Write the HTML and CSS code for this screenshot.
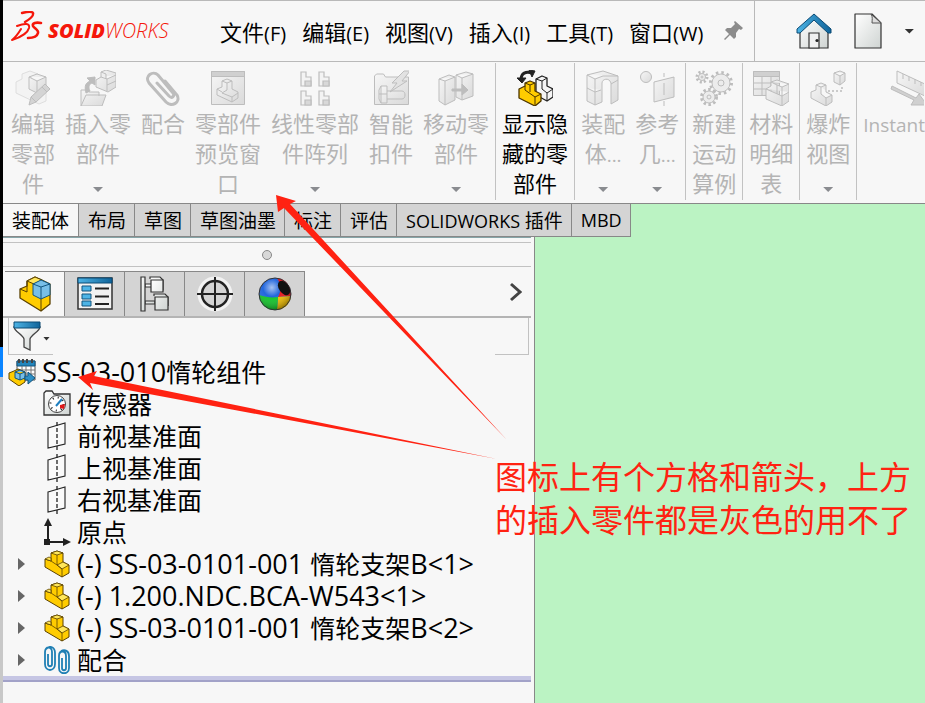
FILE: index.html
```
<!DOCTYPE html>
<html lang="zh-CN">
<head>
    <meta charset="UTF-8">
    <meta name="viewport" content="width=device-width, initial-scale=1.0">
    <title>SOLIDWORKS</title>
    <link rel="stylesheet" href="styles.css">
</head>
<body>

    <!-- Shared gradients and repeated icons -->
    <svg class="defs" width="0" height="0">
        <defs>
            <linearGradient id="blue" x1="0" y1="0" x2="1" y2="0">
                <stop offset="0" stop-color="#4db4e6"/>
                <stop offset="1" stop-color="#10649a"/>
            </linearGradient>
            <linearGradient id="paper" x1="0" y1="0" x2="1" y2="1">
                <stop offset="0" stop-color="#ffffff"/>
                <stop offset="1" stop-color="#cfd4d2"/>
            </linearGradient>
            <linearGradient id="dim" x1="0" y1="0" x2="1" y2="1">
                <stop offset="0" stop-color="#f6f6f6"/>
                <stop offset="1" stop-color="#dadada"/>
            </linearGradient>
            <radialGradient id="ball" cx="0.4" cy="0.3" r="0.7">
                <stop offset="0" stop-color="#fff" stop-opacity="0.6"/>
                <stop offset="0.4" stop-color="#fff" stop-opacity="0"/>
                <stop offset="1" stop-color="#000" stop-opacity="0.35"/>
            </radialGradient>
            <symbol id="part" viewBox="0 0 26 28">
                <path d="M1 9 7 11V3l6-2 6 2v9l6 3v8l-7 4L1 17z" fill="#fc0" stroke="#5c4200" stroke-linejoin="round"/>
                <path d="m7 3 6 2 6-2-6-2zM18 19l7-4-6-3-6 3zM1 9l4-2 2 1v3z" fill="#ffe65a" stroke="#5c4200" stroke-width="0.8"/>
                <path d="M13 5v10l5 4v8M7 11l6 4" fill="none" stroke="#5c4200" stroke-width="0.8"/>
            </symbol>
            <symbol id="plane" viewBox="0 0 28 28">
                <path d="M5 6 22 1v21L5 26z" fill="#fafafa" stroke="#222" stroke-width="1.1"/>
                <path d="M14 0v28" stroke="#222" stroke-width="1.3" stroke-dasharray="4 2"/>
            </symbol>
        </defs>
    </svg>

    <div class="edge"></div>

    <div class="app">
        <!-- Menu bar -->
        <header class="menu-bar">
            <div class="logo">
                <svg width="32" height="32" viewBox="0 0 32 32" fill="none" stroke="#f5170b" stroke-linecap="round">
                    <path d="M11 2c4-1 10-2 11 0 1 3-3 6-8 9" stroke-width="2.4"/>
                    <path d="M6 15c8-3 13-3 12 2-1 4-7 9-17 12 4-3 6-6 9-11" stroke-width="2" stroke-linejoin="round"/>
                    <path d="M30 12c-5-1-9 0-8 3 1 2 6 4 5 7-1 4-6 5-10 5" stroke-width="2.6"/>
                </svg>
                <span class="logo-text"><b>SOLID</b>WORKS</span>
            </div>
            <nav class="menus">
                <button>文件<span>(F)</span></button>
                <button>编辑<span>(E)</span></button>
                <button>视图<span>(V)</span></button>
                <button>插入<span>(I)</span></button>
                <button>工具<span>(T)</span></button>
                <button>窗口<span>(W)</span></button>
            </nav>
            <button class="pin" aria-label="固定">
                <svg width="20" height="20" viewBox="0 0 20 20" fill="#8c8c8c">
                    <path d="m11 0 8 7-2 2-2-1-3 4v4l-2 2-4-4-5 5-1-1 5-5-4-4 2-2h4l4-4-1-2z"/>
                </svg>
            </button>
            <div class="quick">
                <button aria-label="主页">
                    <svg width="36" height="36" viewBox="0 0 36 36">
                        <path d="M4 17 18 5l14 12v18H4z" fill="url(#paper)" stroke="#333" stroke-width="1.2"/>
                        <path d="M13 35V20h10v15z" fill="#f0f0f0" stroke="#333" stroke-width="1.2"/>
                        <path d="M18 1 1 16v4h3L18 7l14 13h3v-4z" fill="url(#blue)" stroke="#0b4a74"/>
                        <circle cx="21" cy="27.5" r="1.6" fill="#222"/>
                    </svg>
                </button>
                <button aria-label="新建">
                    <svg width="28" height="36" viewBox="0 0 28 36">
                        <path d="M1 1h17l9 9v25H1z" fill="url(#paper)" stroke="#333" stroke-width="1.2" stroke-linejoin="round"/>
                        <path d="M17 1c2 3 1 6 1 9h9z" fill="#ddd" stroke="#555"/>
                    </svg>
                </button>
                <button aria-label="更多"><i class="caret dark"></i></button>
            </div>
        </header>

        <!-- Command toolbar -->
        <div class="toolbar">
            <div class="group">
                <button disabled>
                    <svg width="36" height="36" viewBox="0 0 36 36" fill="url(#dim)" stroke="#bdbdbd">
                        <path d="M1 12 7 9V4l8-3 8 3-7 3v9l15 7v8l-7 3L1 23z" stroke="#dedede" fill="#f3f3f3"/>
                        <path d="m14 7 8-3 9 3v12l-9 4-8-4zM14 7l8 4 9-4M22 11v12"/>
                        <path d="m14 35 2-8 14-13 5 5-14 13zM27 17l5 5M16 27l5 5" fill="#d4d4d4"/>
                    </svg>
                    <span class="label">编辑<br>零部<br>件</span>
                </button>
                <button disabled>
                    <svg width="36" height="36" viewBox="0 0 36 36" fill="url(#dim)" stroke="#bdbdbd">
                        <path d="M1 36V20h6l2 2h10v4M1 36l5-11h20l-4 11z"/>
                        <path d="m16 10 5-3V2l5-2 10 3v14l-8 5-12-5zM21 7l6 2 9-4M27 9v12M21 2l5 2v5M27 15l9-4"/>
                        <path d="M6 23c-2-8 0-10 4-12l-3-3 8-1v8l-3-2c-3 1-4 4-2 8z" fill="#bdbdbd"/>
                    </svg>
                    <span class="label">插入零<br>部件</span>
                    <i class="caret"></i>
                </button>
                <button disabled>
                    <svg width="36" height="36" viewBox="0 0 36 36" fill="none" stroke="#bdbdbd" stroke-width="3" stroke-linecap="round">
                        <path d="m12 13 12 13c3 3 6 0 4-3L13 5C8 0-1 6 4 13l17 19c6 6 15 0 11-7L20 11"/>
                    </svg>
                    <span class="label">配合</span>
                </button>
                <button disabled>
                    <svg width="36" height="36" viewBox="0 0 36 36" fill="url(#dim)" stroke="#bdbdbd">
                        <path d="M1.5 1.5h33v33h-33z"/>
                        <path d="M1.5 1.5h33v5h-33z" fill="#d0d0d0"/>
                        <path d="m7 19 5-2v-6l5-2 5 2v8l6 3v6l-6 4-15-7zM12 11l5 2 5-2M17 13v7l-5 3 10 4v5M22 27l6-4M7 19l5 3"/>
                    </svg>
                    <span class="label">零部件<br>预览窗<br>口</span>
                </button>
                <button disabled>
                    <svg width="36" height="36" viewBox="0 0 36 36" fill="#f3f3f3" stroke="#bdbdbd" stroke-width="1.2">
                        <path d="M4 2h5v5h5v9H4zM22 2h5v5h5v9H22zM4 21h5v5h5v9H4zM22 21h5v5h5v9H22z"/>
                        <path d="M8 11h6v5H8zM26 11h6v5h-6zM8 30h6v5H8zM26 30h6v5h-6z" fill="#d8d8d8"/>
                    </svg>
                    <span class="label">线性零部<br>件阵列</span>
                    <i class="caret"></i>
                </button>
                <button disabled>
                    <svg width="36" height="36" viewBox="0 0 36 36" fill="url(#dim)" stroke="#bdbdbd">
                        <path d="M1.5 34.500V6l2-2h7l2 3h23v27.500z"/>
                        <path d="M8 16h6v17H8l-2-4v-9zM14 21h15c4 0 4 8 0 8H14M8 16v17M6 24h8"/>
                        <path d="m31 1-12 12h5l-7 9 17-11h-5l8-10z" fill="#e2e2e2"/>
                    </svg>
                    <span class="label">智能<br>扣件</span>
                </button>
                <button disabled>
                    <svg width="36" height="36" viewBox="0 0 36 36" fill="url(#dim)" stroke="#bdbdbd">
                        <path d="m1 9 10-4 6 2v23L7 35l-6-4zM1 9l6 2 10-4M7 11v24"/>
                        <path d="m18 5 10-3 7 2v22l-11 4-6-3zM18 5l6 3 11-4M24 8v22"/>
                        <path d="M14 19h10v-5l6 6-6 5v-4H14z" fill="#bdbdbd"/>
                    </svg>
                    <span class="label">移动零<br>部件</span>
                    <i class="caret"></i>
                </button>
            </div>
            <div class="group">
                <button>
                    <svg width="36" height="36" viewBox="0 0 36 36" stroke="#222" stroke-linejoin="round">
                        <path d="m19 9 6-3 5 2v8l6 3v8l-6 4-11-6z" fill="#f5f5f5" stroke-width="1.3"/>
                        <path d="m19 9 6 2 5-3M25 11v8l5 4 6-4M30 23v8" fill="none"/>
                        <path d="m2 19 6-3v-3l5-2 5 2v8l6 3v7l-6 5-16-8z" fill="#fc0" stroke="#4c3500" stroke-width="1.3"/>
                        <path d="m8 13 5 2 5-2M13 15v7M8 16v4l10 7 6-3M18 27v8" fill="none" stroke="#4c3500"/>
                        <path d="M4 10c0-7 5-9 11-7" fill="none" stroke-width="3"/>
                        <path d="m0 8 5 5 4-5zM12 0l6 1-3 6z" fill="#222"/>
                    </svg>
                    <span class="label">显示隐<br>藏的零<br>部件</span>
                </button>
            </div>
            <div class="group">
                <button disabled>
                    <svg width="36" height="36" viewBox="0 0 36 36" fill="url(#dim)" stroke="#bdbdbd">
                        <path d="m2 5 16-4 15 5v24l-7 4V13c-2-6-9-4-9 0v19l-7 3-8-4zM2 5l8 4 8-3 15 0M10 9v26M2 18l8 4 6-2M26 14l7-4"/>
                    </svg>
                    <span class="label">装配<br>体<span>...</span></span>
                    <i class="caret"></i>
                </button>
                <button disabled>
                    <svg width="36" height="36" viewBox="0 0 36 36" fill="url(#dim)" stroke="#bdbdbd">
                        <circle cx="7" cy="7" r="5.500"/>
                        <path d="m15 12 20-5v20l-20 5zM25 3v4M25 13v12M25 31v5"/>
                    </svg>
                    <span class="label">参考<br>几<span>...</span></span>
                    <i class="caret"></i>
                </button>
            </div>
            <div class="group">
                <button disabled>
                    <svg width="38" height="36" viewBox="0 0 38 36" fill="#ececec" stroke="#bdbdbd">
                        <g fill="none" stroke-width="3">
                            <circle cx="26" cy="13" r="10.5" stroke-dasharray="2.5 3"/>
                            <circle cx="14" cy="27" r="7.5" stroke-dasharray="2.5 2.4"/>
                            <circle cx="7" cy="7" r="5" stroke-dasharray="2 1.900"/>
                        </g>
                        <circle cx="26" cy="13" r="9"/><circle cx="26" cy="13" r="3"/>
                        <circle cx="14" cy="27" r="6"/><circle cx="14" cy="27" r="2"/>
                        <circle cx="7" cy="7" r="3.5"/><circle cx="7" cy="7" r="1"/>
                    </svg>
                    <span class="label">新建<br>运动<br>算例</span>
                </button>
            </div>
            <div class="group">
                <button disabled>
                    <svg width="36" height="36" viewBox="0 0 36 36" fill="url(#dim)" stroke="#bdbdbd">
                        <path d="M.5 1.500h26v24H.5zM.5 13h26M.5 19h26M9 6v19M18 6v19"/>
                        <path d="M.5 1.500h26v5H.5z" fill="#d0d0d0"/>
                        <path d="m13 19 5-3v-4l6-2 12 4v17l-7 5-16-7zM18 12l6 3 5 2 7-3M29 17v19M24 15v9M13 19l16 7 7-4"/>
                    </svg>
                    <span class="label">材料<br>明细<br>表</span>
                </button>
            </div>
            <div class="group">
                <button disabled>
                    <svg width="36" height="36" viewBox="0 0 36 36" fill="url(#dim)" stroke="#bdbdbd">
                        <path d="m1 22 5-2v-5l5-2 5 2v7l6 3v7l-6 4-15-8zM6 15l5 2 5-2M11 17v7l5 4 6-3M16 28v8"/>
                        <path d="m24 3 6-2 5 2v8l-5 4-6-3zM24 3l6 3 5-3M30 6v9"/>
                        <path d="M18 21h14v-6" fill="none" stroke-dasharray="2 2" stroke-width="1.5"/>
                    </svg>
                    <span class="label">爆炸<br>视图</span>
                    <i class="caret"></i>
                </button>
            </div>
            <div class="group">
                <button disabled>
                    <svg width="60" height="36" viewBox="0 0 60 36" fill="url(#dim)" stroke="#bdbdbd">
                        <path d="M33 1 63 15v12L33 13zM39 4v5M45 7v4M51 9v5M57 12v4"/>
                        <path d="m28 16 24 12 3-4 8 11H47l3-5-23-11z" fill="#d0d0d0"/>
                    </svg>
                    <span class="label"><span>Instant</span></span>
                </button>
            </div>
        </div>

        <!-- Work area -->
        <main class="workspace">
            <div class="tabs">
                <button class="active">装配体</button>
                <button>布局</button>
                <button>草图</button>
                <button>草图油墨</button>
                <button>标注</button>
                <button>评估</button>
                <button><span>SOLIDWORKS </span>插件</button>
                <button><span>MBD</span></button>
            </div>

            <aside class="panel">
                <div class="grip"><i></i></div>

                <div class="manager">
                    <button class="active" aria-label="设计树">
                        <svg width="34" height="36" viewBox="0 0 34 36" stroke="#5c4200" stroke-linejoin="round">
                            <path d="m2 13 7-3V5l8-4 7 3 8 4v20l-9 7-21-13z" fill="#fc0" stroke-width="1.3"/>
                            <path d="m9 5 8-4 7 3-8 4z" fill="#ffe65a"/>
                            <path d="m2 13 7 3V5M23 23v12" fill="none"/>
                            <path d="m15 8 8-4 9 4v11l-9 4-8-4z" fill="#78bfe8" stroke="#12557f"/>
                            <path d="m15 8 8 3 9-3M23 11v12" fill="none" stroke="#12557f"/>
                        </svg>
                    </button>
                    <button aria-label="属性">
                        <svg width="36" height="34" viewBox="0 0 36 34">
                            <path d="M1 1h34v31H1z" fill="#f2f2f2" stroke="#333" stroke-width="1.5"/>
                            <path d="M1 1h34v5H1z" fill="url(#blue)" stroke="#0b4a74"/>
                            <path d="M5 9h9v5H5zM5 17h9v5H5zM5 24h9v5H5z" fill="#4db4e6" stroke="#12557f"/>
                            <path d="M18 11.500h14M18 19.500h14M18 27h14" stroke="#222" stroke-width="2"/>
                        </svg>
                    </button>
                    <button aria-label="配置">
                        <svg width="30" height="36" viewBox="0 0 30 36" fill="url(#paper)" stroke="#333" stroke-width="1.2">
                            <path d="M5 8h7v3H5zM5 25h10v3H5z"/>
                            <path d="M1 1h4v34H1z"/>
                            <path d="M10 3V1h10l3 3v10h-2M14 20v-2h11l3 3v9"/>
                            <path d="M11 4h12v12H11zM15 21h13v13H15z"/>
                        </svg>
                    </button>
                    <button aria-label="尺寸">
                        <svg width="36" height="36" viewBox="0 0 36 36" fill="none" stroke="#222">
                            <circle cx="18" cy="18" r="15" stroke="#f2f2f2" stroke-width="5"/>
                            <circle cx="18" cy="18" r="13" stroke-width="2.5"/>
                            <path d="M18 1v34M0 18h36" stroke-width="2"/>
                        </svg>
                    </button>
                    <button aria-label="外观">
                        <svg width="36" height="36" viewBox="0 0 36 36">
                            <circle cx="18" cy="18" r="16" fill="#2266dd"/>
                            <path d="M20 2c9 1 14 8 14 18l-13 1c4-7 3-13-1-19z" fill="#e8161c"/>
                            <path d="m34 20-13 1-1 13c8-1 13-6 14-14z" fill="#f0be00"/>
                            <path d="M2 19c7 2 12 3 19 2l-1 13C10 35 3 29 2 19z" fill="#12c52a"/>
                            <circle cx="18" cy="18" r="16" fill="url(#ball)" stroke="#333"/>
                            <ellipse cx="27" cy="12" rx="5" ry="8" fill="#111" transform="rotate(-35 27 12)"/>
                        </svg>
                    </button>
                    <button class="more" aria-label="展开">
                        <svg width="14" height="20" viewBox="0 0 14 20"><path d="m3 2 9 8-9 8" fill="none" stroke="#444" stroke-width="3"/></svg>
                    </button>
                </div>

                <div class="filter">
                    <button aria-label="过滤器">
                        <svg width="28" height="30" viewBox="0 0 28 30">
                            <path d="M1 6h26c0 4-9 8-10 12v11l-6-3v-8C10 14 1 10 1 6z" fill="url(#paper)" stroke="#444" stroke-width="1.3"/>
                            <path d="M1 1h26v6H1z" fill="url(#blue)" stroke="#0b4a74"/>
                        </svg>
                        <i class="caret small"></i>
                    </button>
                    <input type="text" aria-label="过滤">
                    <span class="filter-end"></span>
                </div>

                <ul class="tree">
                    <li class="root">
                        <svg width="28" height="28" viewBox="0 0 28 28">
                            <path d="M9 3h18v19H9z" fill="#fff" stroke="#555"/>
                            <path d="M9 3h18v5H9z" fill="#2386bd" stroke="#12557f"/>
                            <path d="M9 12h18M9 16h18M14 8v14M18 8v14M23 8v14" stroke="#777"/>
                            <path d="M11 5V1M15 5V1M19 5V1M24 5V1" stroke="#444" stroke-width="2"/>
                            <path d="m1 15 5-2 4-2 7 3v10l-6 4-10-7z" fill="#fc0" stroke="#5c4200"/>
                            <path d="m7 14 5-2 5 2v6l-5 2-5-2zM7 14l5 2 5-2M12 16v6" fill="#78bfe8" stroke="#12557f"/>
                            <path d="M17 18h3v-4l7 6-7 6v-4h-3z" fill="#2c8fc6" stroke="#12557f"/>
                        </svg>
                        <div class="name"><span>SS-03-010</span>惰轮组件</div>
                    </li>
                    <li>
                        <svg width="28" height="28" viewBox="0 0 28 28">
                            <path d="M1 25V3l2-2h6l2 3h16v21z" fill="url(#paper)" stroke="#333" stroke-width="1.3"/>
                            <circle cx="14" cy="14" r="8.5" fill="#fff" stroke="#444"/>
                            <circle cx="14" cy="14" r="6.5" fill="none" stroke="#222" stroke-width="2" stroke-dasharray="1 4.1"/>
                            <path d="m13 16 6-7" stroke="#1e7fc0" stroke-width="2"/>
                            <path d="m17 15 5-1-1 5-4-1z" fill="#e01818"/>
                        </svg>
                        <div class="name">传感器</div>
                    </li>
                    <li><svg width="28" height="28"><use href="#plane"/></svg><div class="name">前视基准面</div></li>
                    <li><svg width="28" height="28"><use href="#plane"/></svg><div class="name">上视基准面</div></li>
                    <li><svg width="28" height="28"><use href="#plane"/></svg><div class="name">右视基准面</div></li>
                    <li>
                        <svg width="28" height="28" viewBox="0 0 28 28" fill="#222">
                            <path d="M4 21V8H1l4-8 4 8H6v13h1v2h13v-3l8 4-8 4v-3H7v2H1v-6z"/>
                        </svg>
                        <div class="name">原点</div>
                    </li>
                    <li class="branch">
                        <button aria-label="展开"></button>
                        <svg width="28" height="28"><use href="#part"/></svg>
                        <div class="name"><span>(-) SS-03-0101-001 </span>惰轮支架<span>B&lt;1&gt;</span></div>
                    </li>
                    <li class="branch">
                        <button aria-label="展开"></button>
                        <svg width="28" height="28"><use href="#part"/></svg>
                        <div class="name"><span>(-) 1.200.NDC.BCA-W543&lt;1&gt;</span></div>
                    </li>
                    <li class="branch">
                        <button aria-label="展开"></button>
                        <svg width="28" height="28"><use href="#part"/></svg>
                        <div class="name"><span>(-) SS-03-0101-001 </span>惰轮支架<span>B&lt;2&gt;</span></div>
                    </li>
                    <li class="branch">
                        <button aria-label="展开"></button>
                        <svg width="28" height="28" viewBox="0 0 28 28" fill="none" stroke="#1f7fb4" stroke-width="1.8">
                            <path d="M5 8v10c0 3 4 3 4 0V6c0-6-7-6-7 0v12c0 8 10 8 10 0V7c0-6-5-8-9-4"/>
                            <path d="M19 12v10c0 3 4 3 4 0V10c0-6-7-6-7 0v12c0 7 10 7 10 0V10c0-5-4-7-8-5"/>
                        </svg>
                        <div class="name">配合</div>
                    </li>
                </ul>
            </aside>
        </main>
    </div>

    <!-- Notes over the window -->
    <svg class="arrows" width="520" height="480" fill="#ff2212">
        <path d="m276 195 20 6-6 3 217 236L284 208l-6 4z"/>
        <path d="m78 377 19-6-3 5 403 83L90 383l3 7z"/>
    </svg>
    <p class="note">图标上有个方格和箭头，上方<br>的插入零件都是灰色的用不了</p>

</body>
</html>
```
FILE: styles.css
```
* {
    box-sizing: border-box;
}

body {
    margin: 0;
    min-height: 100vh;
    display: flex;
    position: relative;
    overflow: hidden;
    background: #f7f7f7;
    color: #000;
    font-family: "Open Sans", "Noto Sans CJK SC", sans-serif;
    font-size: 22px;
}

button {
    margin: 0;
    padding: 0;
    border: none;
    background: none;
    color: inherit;
    font: inherit;
    white-space: nowrap;
}

svg {
    display: block;
    flex: none;
}

.defs {
    position: absolute;
}

.edge {
    flex: none;
    width: 3px;
    background: linear-gradient(#000 347px, #0a84ff 347px, #0a84ff 377px, #c8c8c8 377px);
}

.app {
    flex: 1;
    min-width: 0;
    display: flex;
    flex-direction: column;
}

.caret {
    width: 10px;
    height: 5px;
    background: #8a8c90;
    clip-path: polygon(0 0, 100% 0, 50% 100%);
}

.caret.dark {
    display: block;
    background: #333;
}

.caret.small {
    width: 7px;
    height: 4px;
    margin-top: 5px;
    background: #333;
}

/*--------------------
Menu bar
--------------------*/
.menu-bar {
    display: flex;
    align-items: stretch;
    height: 62px;
    border-top: 1px solid #b9b9b9;
    border-bottom: 1px solid #b9b9b9;
}

.logo {
    display: flex;
    align-items: center;
    gap: 5px;
    width: 217px;
    padding: 0 0 8px 8px;
    color: #f5170b;
}

.logo-text {
    padding-top: 8px;
    font-size: 20px;
    font-style: italic;
    font-weight: 300;
    line-height: 24px;
}

.logo-text b {
    font-weight: 800;
}

.menus {
    display: flex;
    gap: 16px;
}

.menus span,
.label span {
    font-size: 20px;
}

.pin {
    padding: 0 10px 0 21px;
}

.quick {
    flex: 1;
    display: flex;
    align-items: center;
    gap: 22px;
    padding-left: 41px;
    border-left: 1px solid #b9b9b9;
}

/*--------------------
Toolbar
--------------------*/
.toolbar {
    display: flex;
    height: 141px;
    padding: 1px 0 3px 3px;
    overflow: hidden;
}

.group {
    flex: none;
    display: flex;
    padding: 0 1px;
    border-left: 1px solid #c2c2c2;
}

.group:first-child {
    border-left: none;
    padding-left: 0;
}

.group button {
    position: relative;
    display: flex;
    flex-direction: column;
    align-items: center;
    justify-content: flex-start;
    gap: 2px;
    padding: 7px 5px 0;
}

.group button:disabled {
    color: #b4b4b4;
}

.label {
    line-height: 30px;
}

.label span {
    font-size: 19px;
}

/* drop-down mark sits over the last text row */
.group .caret {
    position: absolute;
    left: calc(50% - 5px);
    bottom: 8px;
}

/*--------------------
Command tabs
--------------------*/
.workspace {
    flex: 1;
    background: #bbf3c3;
    border-top: 1px solid #888;
}

.tabs {
    display: flex;
    height: 33px;
    font-size: 19px;
}

.tabs button {
    padding: 0 8px 0 9px;
    background: #d4d4d4;
    border-right: 1px solid #888;
    border-bottom: 1px solid #888;
}

.tabs .active {
    padding-right: 9px;
    background: #f7f7f7;
}

.tabs span {
    font-size: 18px;
}

/*--------------------
Side panel
--------------------*/
.panel {
    width: 532px;
    min-height: calc(100vh - 237px);
    background: #f7f7f7;
    border-right: 1px solid #888;
}

.grip {
    height: 30px;
    margin-right: 3px;
    border-top: 1px solid #86a5a8;
    border-bottom: 1px solid #c2c2c2;
    display: flex;
    flex-direction: column;
    align-items: center;
}

.grip::before {
    content: "";
    width: 100%;
    height: 4px;
    border-bottom: 1px solid #c2c2c2;
}

.grip i {
    width: 10px;
    height: 10px;
    margin-top: 7px;
    border: 1px solid #888;
    border-radius: 50%;
    background: #d8d8d8;
}

.manager {
    display: flex;
    height: 51px;
    margin-right: 3px;
    padding: 4px 0 0 2px;
    border-bottom: 2px solid #b4b4b4;
}

.manager button {
    display: flex;
    align-items: center;
    justify-content: center;
    width: 60px;
    background: #d4d4d4;
    border: 1px solid #888;
    border-left: none;
    border-bottom: none;
}

.manager .active {
    background: none;
}

.manager .more {
    margin-left: auto;
    width: 32px;
    padding-bottom: 4px;
    background: none;
    border: none;
}

.filter {
    display: flex;
    height: 37px;
    margin: 0 5px;
    border: 1px solid #c2c2c2;
    border-top: none;
    border-bottom: none;
}

.filter button {
    display: flex;
    align-items: center;
    gap: 2px;
    width: 44px;
    padding-left: 4px;
    border-bottom: 1px solid #c2c2c2;
}

.filter input {
    flex: 1;
    min-width: 0;
    border: none;
    outline: none;
    background: none;
    font-size: 22px;
}

.filter-end {
    width: 33px;
    border-bottom: 1px solid #c2c2c2;
}

/*--------------------
Feature tree
--------------------*/
.tree {
    margin: 0 3px 0 0;
    padding: 1px 0 0;
    list-style: none;
    font-size: 25px;
    line-height: 32px;
}

.tree::after {
    content: "";
    display: block;
    height: 4px;
    background: #c6c6e4;
    border-bottom: 2px solid #a2a2c8;
}

.tree li {
    display: flex;
    align-items: center;
    height: 32px;
    padding-left: 40px;
}

.tree li.root {
    padding-left: 5px;
}

.tree li.branch {
    padding-left: 15px;
}

.tree svg {
    margin-right: 6px;
}

.name {
    white-space: pre;
}

.name span {
    font-size: 27px;
}

.branch button {
    width: 7px;
    height: 12px;
    margin-right: 18px;
    background: #666;
    clip-path: polygon(0 0, 100% 50%, 0 100%);
}

/*--------------------
Notes
--------------------*/
.arrows {
    position: absolute;
    top: 0;
    left: 0;
    z-index: 1;
    pointer-events: none;
}

.note {
    position: absolute;
    z-index: 2;
    top: 455px;
    left: 495px;
    margin: 0;
    color: #ff2212;
    font-size: 32px;
    line-height: 43px;
    white-space: nowrap;
}
```
